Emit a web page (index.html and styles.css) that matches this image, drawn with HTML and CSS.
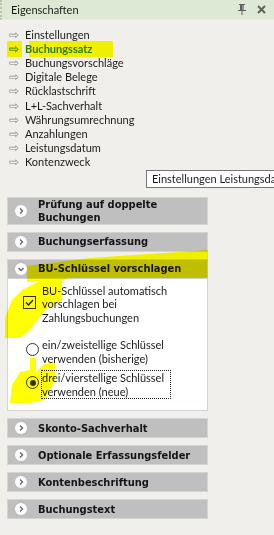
FILE: index.html
```html
<!DOCTYPE html>
<html lang="de">
<head>
    <meta charset="UTF-8">
    <title>Eigenschaften</title>
    <link rel="stylesheet" href="styles.css">
</head>
<body>
    <div class="titleBar">
        <span class="titleText">Eigenschaften</span>
        <span class="titleIcons">
            <svg width="10" height="11" viewBox="0 0 10 11"><path d="M2 0h6v1H7v5h2v1H5.5v4h-1V7H1V6h2V1H2z" fill="#606060"/><rect x="5" y="1" width="2" height="5" fill="#909090"/></svg>
            <svg width="9" height="9" viewBox="0 0 9 9"><path d="M1 1l7 7M8 1l-7 7" stroke="#606060" stroke-width="2"/></svg>
        </span>
    </div>

    <ul class="navList">
        <li><span class="arrow">&#8680;</span>Einstellungen</li>
        <li class="active"><span class="arrow">&#8680;</span>Buchungssatz</li>
        <li><span class="arrow">&#8680;</span>Buchungsvorschläge</li>
        <li><span class="arrow">&#8680;</span>Digitale Belege</li>
        <li><span class="arrow">&#8680;</span>Rücklastschrift</li>
        <li><span class="arrow">&#8680;</span>L+L-Sachverhalt</li>
        <li><span class="arrow">&#8680;</span>Währungsumrechnung</li>
        <li><span class="arrow">&#8680;</span>Anzahlungen</li>
        <li><span class="arrow">&#8680;</span>Leistungsdatum</li>
        <li><span class="arrow">&#8680;</span>Kontenzweck</li>
    </ul>

    <div class="tooltip">Einstellungen Leistungsdatum</div>

    <div class="panels">
        <div class="panelHead">
            <span class="chev"><svg width="12" height="12" viewBox="0 0 12 12"><path d="M5 3.5L7.5 6 5 8.5" fill="none" stroke="#666" stroke-width="1.4"/></svg></span>
            <span>Prüfung auf doppelte<br>Buchungen</span>
        </div>
        <div class="panelHead">
            <span class="chev"><svg width="12" height="12" viewBox="0 0 12 12"><path d="M5 3.5L7.5 6 5 8.5" fill="none" stroke="#666" stroke-width="1.4"/></svg></span>
            <span>Buchungserfassung</span>
        </div>
        <div class="panel open">
            <div class="panelHead">
                <span class="chev"><svg width="12" height="12" viewBox="0 0 12 12"><path d="M3.5 5L6 7.5 8.5 5" fill="none" stroke="#666" stroke-width="1.4"/></svg></span>
                <span>BU-Schlüssel vorschlagen</span>
            </div>
            <div class="panelBody">
                <div class="option checkOption">
                    <span class="checkbox"><svg width="11" height="11" viewBox="0 0 11 11"><path d="M2 5.5l2.5 2.5 4.5-5" fill="none" stroke="#222" stroke-width="1.3"/></svg></span>
                    <span>BU-Schlüssel automatisch<br>vorschlagen bei<br>Zahlungsbuchungen</span>
                </div>
                <div class="option radioOption">
                    <span class="radio"></span>
                    <span>ein/zweistellige Schlüssel<br>verwenden (bisherige)</span>
                </div>
                <div class="option radioOption">
                    <span class="radio checked"></span>
                    <span class="focused">drei/vierstellige Schlüssel<br>verwenden (neue)</span>
                </div>
            </div>
        </div>
        <div class="panelHead">
            <span class="chev"><svg width="12" height="12" viewBox="0 0 12 12"><path d="M5 3.5L7.5 6 5 8.5" fill="none" stroke="#666" stroke-width="1.4"/></svg></span>
            <span>Skonto-Sachverhalt</span>
        </div>
        <div class="panelHead">
            <span class="chev"><svg width="12" height="12" viewBox="0 0 12 12"><path d="M5 3.5L7.5 6 5 8.5" fill="none" stroke="#666" stroke-width="1.4"/></svg></span>
            <span>Optionale Erfassungsfelder</span>
        </div>
        <div class="panelHead">
            <span class="chev"><svg width="12" height="12" viewBox="0 0 12 12"><path d="M5 3.5L7.5 6 5 8.5" fill="none" stroke="#666" stroke-width="1.4"/></svg></span>
            <span>Kontenbeschriftung</span>
        </div>
        <div class="panelHead">
            <span class="chev"><svg width="12" height="12" viewBox="0 0 12 12"><path d="M5 3.5L7.5 6 5 8.5" fill="none" stroke="#666" stroke-width="1.4"/></svg></span>
            <span>Buchungstext</span>
        </div>
    </div>

    <!-- marker scribbles drawn over the screenshot -->
    <svg class="marker" width="274" height="535" viewBox="0 0 274 535">
        <rect x="7" y="41" width="15" height="16"/>
        <rect x="29" y="41" width="84" height="16"/>
        <polygon points="27,266 90,258 208,250 208,278 70,278 60,281 27,282"/>
        <polygon points="38,282 62,278 62,300 45,310 30,330 20,338 5,338 5,318 12,300 22,290"/>
        <polygon points="30,358 36,358 36,372 44,364 55,362 55,380 45,400 30,403 10,403 12,385 20,372 30,370"/>
    </svg>
</body>
</html>
```

FILE: styles.css
```css
body {
    margin: 0;
    width: 274px;
    height: 535px;
    background-color: #f0efeb;
    font-family: Lato, "Liberation Sans", sans-serif;
    font-size: 11px;
    color: #1c1c1c;
    position: relative;
    overflow: hidden;
}

.titleBar {
    height: 19px;
    background-color: #dde9d4;
    border-left: 2px dotted #b4c4a8;
    border-bottom: 1px solid #e6ece2;
    display: flex;
    align-items: center;
    justify-content: space-between;
    padding: 0 8px 0 9px;
}

.titleText {
    font-size: 11px;
}

.titleIcons {
    display: flex;
    align-items: center;
    gap: 10px;
}

.navList {
    list-style: none;
    margin: 0;
    padding: 8px 0 0 9px;
}

.navList li {
    height: 14.1px;
    line-height: 14px;
    display: flex;
    align-items: center;
}

.arrow {
    width: 16px;
    color: #8a8a8a;
    font-size: 12px;
}

.navList li.active {
    color: #2f7a12;
    font-weight: bold;
}

.navList li.active .arrow {
    color: #6a9a3a;
}

.tooltip {
    position: absolute;
    left: 146px;
    right: 0;
    top: 170px;
    height: 16px;
    line-height: 16px;
    padding: 0 0 0 5px;
    background-color: #fff;
    border: 1px solid #767676;
    border-right: none;
    white-space: nowrap;
    overflow: hidden;
}

.panels {
    margin: 28px 0 0 7px;
    width: 201px;
    display: flex;
    flex-direction: column;
    gap: 7px;
}

.panelHead {
    background-color: #bfbfbf;
    border: 1px solid #d3d3d3;
    display: flex;
    align-items: center;
    min-height: 18px;
    padding: 0 4px 0 7px;
    font-family: "DejaVu Sans Condensed", "DejaVu Sans", sans-serif;
    font-weight: bold;
    font-size: 11px;
    line-height: 13px;
    color: #151515;
    gap: 11px;
}

.chev {
    width: 12px;
    height: 12px;
    border-radius: 50%;
    background-color: #fff;
    display: flex;
    flex-shrink: 0;
}

.panel.open .panelBody {
    background-color: #fff;
    border: 1px solid #d3d3d3;
    border-top: none;
    padding: 5px 0 12px 15px;
}

.option {
    display: flex;
    align-items: center;
    gap: 6px;
    line-height: 13.5px;
}

.checkOption {
    margin-bottom: 14px;
}

.radioOption {
    align-items: flex-start;
    padding-left: 3px;
    gap: 3px;
}

.radioOption + .radioOption {
    margin-top: 6px;
}

.checkbox {
    width: 11px;
    height: 11px;
    border: 1px solid #333;
    display: flex;
    flex-shrink: 0;
    margin-top: -3px;
}

.radio {
    width: 11px;
    height: 11px;
    border: 1px solid #333;
    border-radius: 50%;
    flex-shrink: 0;
    margin-top: 5px;
    position: relative;
}

.radio.checked::after {
    content: "";
    position: absolute;
    left: 2.5px;
    top: 2.5px;
    width: 6px;
    height: 6px;
    border-radius: 50%;
    background-color: #333;
}

.focused {
    outline: 1px dotted #222;
    padding-right: 6px;
}

.marker {
    position: absolute;
    left: 0;
    top: 0;
    pointer-events: none;
    mix-blend-mode: multiply;
    fill: #ffff00;
}
```
